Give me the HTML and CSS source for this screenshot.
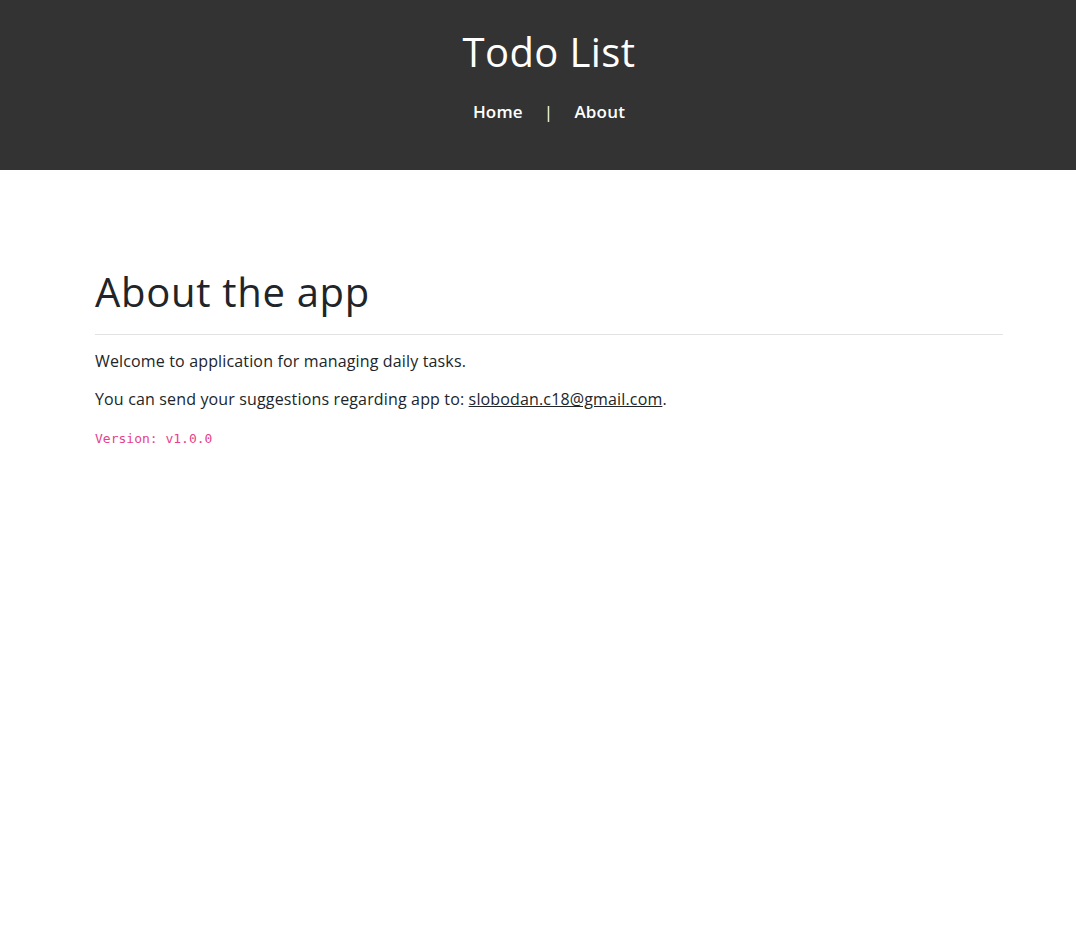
FILE: index.html
```html
<!DOCTYPE html>
<html lang="en">
<head>
<meta charset="utf-8">
<title>Todo List</title>
<link rel="stylesheet" href="styles.css">
</head>
<body>
<header class="site-header">
  <div class="shift">
    <h1 class="brand">Todo List</h1>
    <nav class="nav">
      <a href="#" class="nav-link">Home</a>
      <span class="nav-sep">|</span>
      <a href="#" class="nav-link">About</a>
    </nav>
  </div>
</header>
<main class="shift">
  <section class="container">
    <h2 class="page-title">About the app</h2>
    <hr class="divider">
    <p class="text">Welcome to application for managing daily tasks.</p>
    <p class="text">You can send your suggestions regarding app to: <a href="#" class="mail">slobodan.c18@gmail.com</a>.</p>
    <code class="version">Version: v1.0.0</code>
  </section>
</main>
</body>
</html>
```
FILE: styles.css
```css
html, body {
  margin: 0;
  padding: 0;
  background: #fff;
}
body {
  font-family: "Open Sans", "Noto Sans", sans-serif;
  color: #212529;
  font-size: 16px;
}
.shift {
  padding-left: 22px;
}
.site-header {
  background: #333333;
  height: 170px;
  box-sizing: border-box;
  padding-top: 26px;
  text-align: center;
  color: #fff;
}
.brand {
  margin: 0;
  font-family: "Open Sans", sans-serif;
  font-weight: 400;
  font-size: 40px;
  line-height: 52px;
  letter-spacing: 0.4px;
}
.nav {
  margin-top: 22px;
  display: flex;
  justify-content: center;
  align-items: center;
  gap: 21px;
  font-family: "Open Sans", sans-serif;
  font-size: 17px;
  font-weight: 600;
  line-height: 24px;
  letter-spacing: 0.2px;
}
.nav-link {
  color: #fff;
  text-decoration: none;
}
.nav-sep {
  color: #fff;
  font-weight: 400;
}
.container {
  width: 908px;
  margin: 0 auto;
  padding-top: 92px;
}
.page-title {
  margin: 0;
  font-family: "Open Sans", sans-serif;
  font-weight: 400;
  font-size: 40px;
  line-height: 60px;
  letter-spacing: 0.7px;
  color: #212529;
}
.divider {
  border: 0;
  border-top: 1px solid #e2e2e2;
  margin: 12px 0 14px;
}
.text {
  margin: 0 0 14px;
  line-height: 24px;
  letter-spacing: 0.15px;
}
.mail {
  color: #212529;
  text-decoration: underline;
}
.version {
  display: block;
  margin-top: 20px;
  font-family: "DejaVu Sans Mono", monospace;
  font-size: 13px;
  color: #e83e8c;
}
```
